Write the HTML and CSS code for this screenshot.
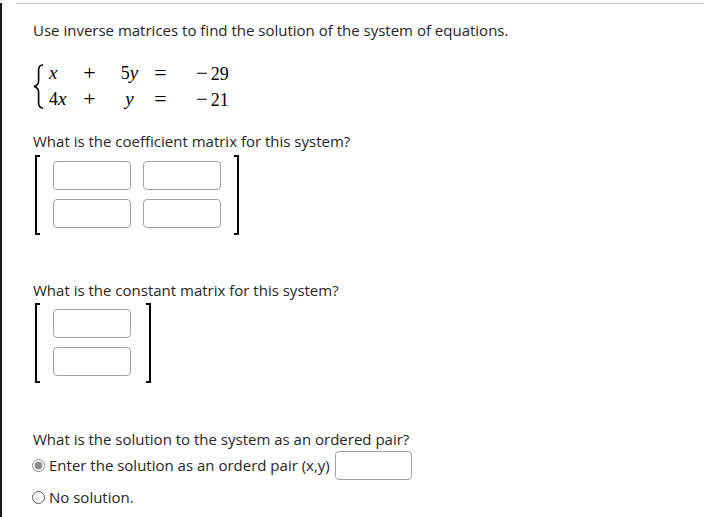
FILE: index.html
```html
<!DOCTYPE html>
<html>
<head>
<meta charset="utf-8">
<link rel="stylesheet" href="styles.css">
</head>
<body>
<div class="page">
  <div class="rule"></div>
  <div class="content">
    <p class="q q-first">Use inverse matrices to find the solution of the system of equations.</p>
    <div class="system">
      <svg class="brace" width="11" height="45" viewBox="0 0 11 45">
        <path d="M10 0.8 C7 1.2 5.6 2.6 5.6 6 L5.6 17 C5.6 20 4 21.8 1 22.5 C4 23.2 5.6 25 5.6 28 L5.6 39 C5.6 42.4 7 43.8 10 44.2" fill="none" stroke="#000" stroke-width="1.6"/>
      </svg>
      <div class="eqgrid">
        <span class="c1"><i>x</i></span><span class="c2 op">+</span><span class="c3">5<i>y</i></span><span class="c4 op">=</span><span class="c5"><span class="minus">−</span>29</span>
        <span class="c1">4<i>x</i></span><span class="c2 op">+</span><span class="c3"><i>y</i></span><span class="c4 op">=</span><span class="c5"><span class="minus">−</span>21</span>
      </div>
    </div>
    <p class="q q-coef">What is the coefficient matrix for this system?</p>
    <div class="matrix matrix-coef">
      <div class="bracket bracket-l"></div>
      <div class="cells cells-2">
        <div class="box"></div><div class="box"></div>
        <div class="box"></div><div class="box"></div>
      </div>
      <div class="bracket bracket-r"></div>
    </div>
    <p class="q q-const">What is the constant matrix for this system?</p>
    <div class="matrix matrix-const">
      <div class="bracket bracket-l"></div>
      <div class="cells cells-1">
        <div class="box"></div>
        <div class="box"></div>
      </div>
      <div class="bracket bracket-r"></div>
    </div>
    <p class="q q-sol">What is the solution to the system as an ordered pair?</p>
    <div class="opt opt-1">
      <span class="radio radio-on"></span>
      <span class="opt-label">Enter the solution as an orderd pair (x,y)</span>
      <div class="box box-pair"></div>
    </div>
    <div class="opt opt-2">
      <span class="radio"></span>
      <span class="opt-label">No solution.</span>
    </div>
  </div>
</div>
</body>
</html>
```
FILE: styles.css
```css
html, body {
  margin: 0;
  padding: 0;
  background: #fff;
}
.page {
  border-left: 2px solid #1a1a1a;
  min-height: 517px;
  box-sizing: border-box;
  font-family: "Open Sans", "Liberation Sans", sans-serif;
  font-size: 15px;
  color: #262626;
}
.rule {
  margin: 3px 0 0 14px;
  border-top: 1px solid #cfcfcf;
}
.content {
  padding-left: 31px;
}
.q {
  margin: 0;
  line-height: 20px;
}
.q-first { margin-top: 16px; }
.system {
  margin-top: 20px;
  display: flex;
  align-items: center;
  height: 52px;
}
.brace {
  display: block;
  margin-left: 0;
}
.eqgrid {
  margin-left: 5px;
  display: grid;
  grid-template-columns: 23px 35px 45px 17px auto;
  grid-auto-rows: 26px;
  line-height: 26px;
  font-family: "Liberation Serif", "DejaVu Serif", serif;
  font-size: 18px;
  color: #000;
}
.eqgrid i {
  font-family: "Liberation Serif", serif;
  font-style: italic;
  font-size: 19px;
}
.op {
  font-size: 22px;
  line-height: 26px;
}
.c1 { text-align: left; }
.c2, .c3, .c4 { text-align: center; }
.c5 { padding-left: 27px; }
.minus {
  font-size: 21px;
  margin-right: 3px;
}
.q-coef { margin-top: 19px; }
.matrix {
  display: flex;
  align-items: stretch;
  margin-left: 2px;
}
.matrix-coef { margin-top: 4px; }
.matrix-const { margin-top: 3px; }
.q-const { margin-top: 45px; }
.q-sol { margin-top: 46px; }
.bracket {
  width: 3px;
  border-top: 2px solid #000;
  border-bottom: 2px solid #000;
}
.bracket-l { border-left: 2px solid #000; }
.bracket-r { border-right: 2px solid #000; }
.cells {
  display: grid;
  grid-auto-rows: 29px;
  row-gap: 9px;
  column-gap: 12px;
  padding: 6px 13px 7px;
}
.cells-2 { grid-template-columns: 78px 78px; }
.cells-1 { grid-template-columns: 78px; padding-right: 15px; }
.box {
  box-sizing: border-box;
  border: 1px solid #a3a3a3;
  border-radius: 4px;
  background: #fff;
  height: 29px;
}
.opt {
  display: flex;
  align-items: center;
}
.opt-1 { margin-top: 2px; height: 29px; }
.opt-2 { margin-top: 7px; height: 20px; }
.opt-1 .opt-label { margin-top: -2px; }
.radio {
  box-sizing: border-box;
  width: 13px;
  height: 13px;
  border-radius: 50%;
  border: 1px solid #5a5a5a;
  background: #fff;
  margin-left: -1px;
  margin-right: 4px;
  flex: none;
}
.radio-on {
  border-color: #8a8a8a;
  background: radial-gradient(circle, #8c8c8c 0 3.6px, #fff 4.2px);
}
.opt-label { line-height: 20px; }
.box-pair {
  width: 77px;
  margin-left: 5px;
}
```
